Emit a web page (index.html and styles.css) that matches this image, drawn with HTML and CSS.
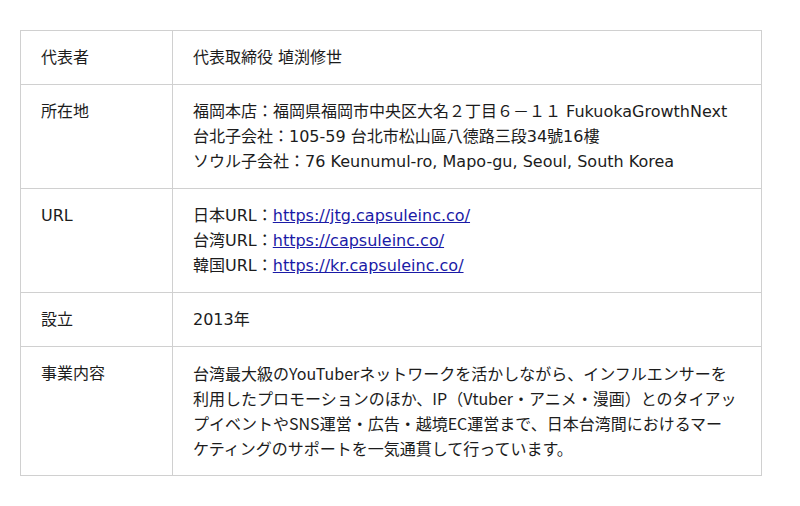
FILE: index.html
```html
<!DOCTYPE html>
<html lang="ja">
<head>
<meta charset="utf-8">
<link rel="stylesheet" href="styles.css">
</head>
<body>
<table class="info">
  <tr><th>代表者</th><td>代表取締役 埴渕修世</td></tr>
  <tr><th>所在地</th><td>福岡本店：福岡県福岡市中央区大名２丁目６－１１ FukuokaGrowthNext<br>台北子会社：105-59 台北市松山區八德路三段34號16樓<br>ソウル子会社：76 Keunumul-ro, Mapo-gu, Seoul, South Korea</td></tr>
  <tr><th>URL</th><td>日本URL：<a href="#">https://jtg.capsuleinc.co/</a><br>台湾URL：<a href="#">https://capsuleinc.co/</a><br>韓国URL：<a href="#">https://kr.capsuleinc.co/</a></td></tr>
  <tr><th>設立</th><td>2013年</td></tr>
  <tr><th>事業内容</th><td class="cjk">台湾最大級のYouTuberネットワークを活かしながら、インフルエンサーを利用したプロモーションのほか、IP（Vtuber・アニメ・漫画）とのタイアップイベントやSNS運営・広告・越境EC運営まで、日本台湾間におけるマー<br>ケティングのサポートを一気通貫して行っています。</td></tr>
</table>
</body>
</html>
```
FILE: styles.css
```css
html, body { margin: 0; padding: 0; background: #fff; }
body { padding: 30px 38px 0 20px; font-family: "DejaVu Sans", "Noto Sans CJK JP", sans-serif; font-size: 16px; color: #1c1c1c; }
.info { width: 742px; border-collapse: collapse; }
.info th, .info td { border: 1px solid #d0d0d0; padding: 14px 20px; line-height: 25px; text-align: left; vertical-align: top; font-weight: normal; }
.info th { width: 111px; }
.info a { color: #1a1aa6; text-decoration: underline; }
.info .cjk { font-family: "Noto Sans CJK JP", sans-serif; }
```
